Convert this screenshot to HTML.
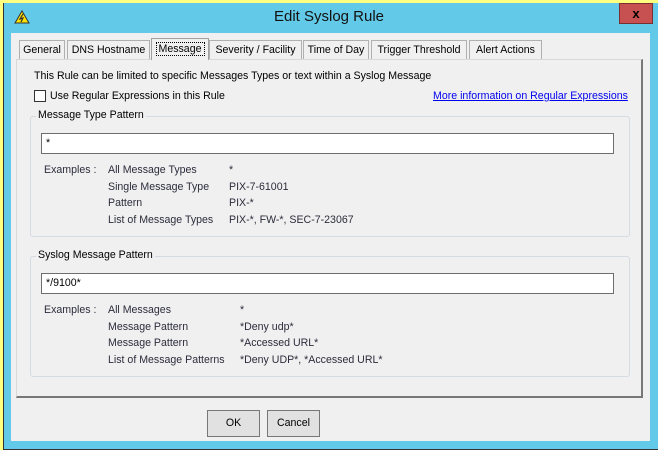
<!DOCTYPE html>
<html><head><style>
*{margin:0;padding:0;box-sizing:border-box}
body{width:658px;height:450px;overflow:hidden;background:#ffff80;font-family:"Liberation Sans",sans-serif;font-size:10.6px;color:#000;position:relative}
.abs{position:absolute}
.win{left:3px;top:3px;width:655px;height:447px;background:#63c9e9;border-left:1px solid #333;border-bottom:1px solid #333}
.client{left:11px;top:33px;width:639px;height:408px;background:#f0f0f0}
.tab{position:absolute;top:40px;height:19px;border:1px solid #b0b0b0;border-bottom:none;background:#f0f0f0;text-align:center;line-height:18px;font-size:10.6px;white-space:nowrap}
.panel{left:16px;top:59px;width:627px;height:339px;border:1px solid #d9d9d9;border-right:2px solid #777;border-bottom:2px solid #777;background:#f0f0f0}
.grp{position:absolute;border:1px solid #d5dbe3;border-radius:3px}
.legend{position:absolute;background:#f0f0f0;padding:0 2px;font-size:10.6px}
.inp{position:absolute;background:#fff;border:1px solid #6e6e6e;height:21px;padding-left:4px;line-height:18px}
.t{position:absolute;font-size:10.6px;white-space:nowrap}
.ex{color:#2c2c3c}
.btn{position:absolute;top:410px;width:53px;height:27px;background:#e1e1e1;border:1px solid #777;text-align:center;line-height:25px}
</style></head><body>
<div class="abs win"></div>
<svg class="abs" style="left:14px;top:10px" width="16" height="14"><polygon points="8,1 15,13 1,13" fill="#ffe000" stroke="#333" stroke-width="1"/><path d="M9,4 L6,9 L9,8 L7,12" stroke="#333" fill="none" stroke-width="1.2"/></svg>
<div class="t" style="left:0;width:658px;text-align:center;top:8px;font-size:15px;color:#111">Edit Syslog Rule</div>
<div class="abs" style="left:619px;top:3px;width:34px;height:21px;background:#c75050;border:1px solid #7a3030;color:#000;font-weight:bold;text-align:center;line-height:19px;font-size:13px">x</div>
<div class="abs client"></div>
<div class="abs panel"></div>
<div class="tab" style="left:19px;width:46px">General</div>
<div class="tab" style="left:67px;width:83px">DNS Hostname</div>
<div class="tab" style="left:209px;width:93px">Severity / Facility</div>
<div class="tab" style="left:303px;width:66px">Time of Day</div>
<div class="tab" style="left:371px;width:96px">Trigger Threshold</div>
<div class="tab" style="left:469px;width:73px">Alert Actions</div>
<div class="tab" style="left:151px;top:38px;width:58px;height:22px;line-height:20px;border-color:#a0a0a0"><span style="outline:1px dotted #000;padding:0 2px">Message</span></div>
<div class="t" style="left:34px;top:70px">This Rule can be limited to specific Messages Types or text within a Syslog Message</div>
<div class="abs" style="left:34px;top:90px;width:12px;height:12px;background:#fff;border:1px solid #333"></div>
<div class="t" style="left:50px;top:90px">Use Regular Expressions in this Rule</div>
<div class="t" style="left:433px;top:90px;color:#0000ee;text-decoration:underline">More information on Regular Expressions</div>

<div class="grp" style="left:30px;top:116px;width:600px;height:121px"></div>
<div class="legend" style="left:36px;top:109px">Message Type Pattern</div>
<div class="inp" style="left:41px;top:133px;width:573px">*</div>
<div class="t ex" style="left:44px;top:164px">Examples :</div>
<div class="t ex" style="left:108px;top:164px">All Message Types</div>
<div class="t ex" style="left:229px;top:164px">*</div>
<div class="t ex" style="left:108px;top:181px">Single Message Type</div>
<div class="t ex" style="left:229px;top:181px">PIX-7-61001</div>
<div class="t ex" style="left:108px;top:197px">Pattern</div>
<div class="t ex" style="left:229px;top:197px">PIX-*</div>
<div class="t ex" style="left:108px;top:214px">List of Message Types</div>
<div class="t ex" style="left:229px;top:214px">PIX-*, FW-*, SEC-7-23067</div>

<div class="grp" style="left:30px;top:256px;width:600px;height:121px"></div>
<div class="legend" style="left:36px;top:249px">Syslog Message Pattern</div>
<div class="inp" style="left:41px;top:273px;width:573px">*/9100*</div>
<div class="t ex" style="left:44px;top:304px">Examples :</div>
<div class="t ex" style="left:108px;top:304px">All Messages</div>
<div class="t ex" style="left:240px;top:304px">*</div>
<div class="t ex" style="left:108px;top:321px">Message Pattern</div>
<div class="t ex" style="left:240px;top:321px">*Deny udp*</div>
<div class="t ex" style="left:108px;top:337px">Message Pattern</div>
<div class="t ex" style="left:240px;top:337px">*Accessed URL*</div>
<div class="t ex" style="left:108px;top:354px">List of Message Patterns</div>
<div class="t ex" style="left:240px;top:354px">*Deny UDP*, *Accessed URL*</div>

<div class="btn" style="left:207px">OK</div>
<div class="btn" style="left:267px">Cancel</div>
</body></html>
